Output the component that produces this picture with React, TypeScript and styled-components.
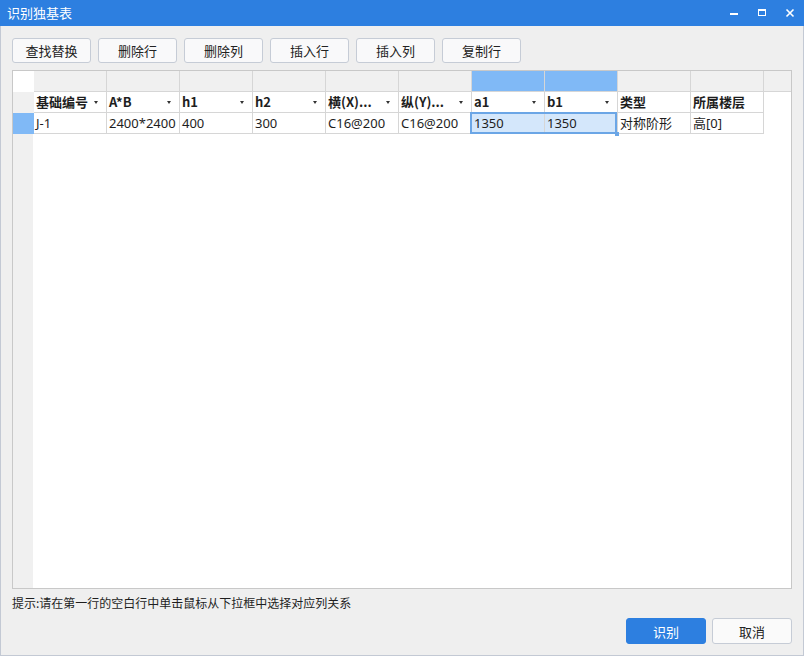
import React from "react";
import styled, { createGlobalStyle } from "styled-components";

const Global = createGlobalStyle`
  html, body { margin: 0; padding: 0; background: #efefef; }
  body { font-family: "Noto Sans", "Noto Sans CJK SC", sans-serif; }
  * { box-sizing: border-box; }
`;

const FONT = `"Noto Sans", "Noto Sans CJK SC", sans-serif`;

const Window = styled.div`
  width: 804px;
  height: 656px;
  display: flex;
  flex-direction: column;
  background: #efefef;
  font-family: ${FONT};
  color: #222;
`;

const TitleBar = styled.div`
  height: 26px;
  flex: none;
  background: #2d7fe0;
  display: flex;
  align-items: center;
  padding-left: 7px;
  color: #fff;
  font-size: 13px;
  font-family: "Noto Sans CJK SC", sans-serif;
`;

const Title = styled.div`
  flex: 1;
  line-height: 26px;
`;

const WinCtl = styled.div`
  width: 28px;
  height: 26px;
  display: flex;
  align-items: center;
  justify-content: center;
`;

const Body = styled.div`
  flex: 1;
  display: flex;
  flex-direction: column;
  padding: 12px 11px 11px 11px;
  border: 1px solid #c3c9d4;
  border-top: none;
`;

const Toolbar = styled.div`
  display: flex;
  gap: 7px;
  height: 25px;
  flex: none;
`;

const ToolButton = styled.button`
  width: 79px;
  height: 25px;
  border: 1px solid #c6ccd6;
  border-radius: 3px;
  background: #f9f9fa;
  font-family: "Noto Sans CJK SC", sans-serif;
  font-size: 13px;
  color: #222;
  padding: 0;
  line-height: 23px;
`;

const Table = styled.div`
  margin-top: 7px;
  height: 519px;
  flex: none;
  border: 1px solid #c8c8c8;
  background: #fff;
  display: flex;
  flex-direction: column;
  position: relative;
`;

const Row = styled.div`
  display: flex;
  height: 21px;
  flex: none;
`;

type Tone = "white" | "grey" | "blue" | "light";
const toneBg: Record<Tone, string> = {
  white: "#ffffff",
  grey: "#f0f0f0",
  blue: "#80b9f6",
  light: "#d4e7fb",
};

const RowHead = styled.div<{ $tone: Tone }>`
  width: 21px;
  flex: none;
  background: ${(p) => toneBg[p.$tone]};
`;

const Cell = styled.div<{ $tone: Tone; $bold?: boolean }>`
  width: 73px;
  flex: none;
  position: relative;
  background: ${(p) => toneBg[p.$tone]};
  border-right: 1px solid #d6d6d6;
  border-bottom: 1px solid #d6d6d6;
  padding: 0 2px;
  display: flex;
  align-items: center;
  font-size: 13px;
  font-weight: ${(p) => (p.$bold ? 700 : 400)};
  font-family: ${(p) => (p.$bold ? `"Noto Sans CJK SC", sans-serif` : FONT)};
  color: #1e1e1e;
  white-space: nowrap;
  line-height: 20px;
`;

const Arrow = styled.span`
  position: absolute;
  right: 8px;
  top: 9px;
  width: 0;
  height: 0;
  border-left: 2.5px solid transparent;
  border-right: 2.5px solid transparent;
  border-top: 3px solid #333;
`;

const Filler = styled.div<{ $tone: Tone; $line?: boolean }>`
  flex: 1;
  background: ${(p) => toneBg[p.$tone]};
  border-bottom: 1px solid ${(p) => (p.$line ? "#d6d6d6" : "transparent")};
`;

const Rest = styled.div`
  flex: 1;
  display: flex;
`;

const RestStrip = styled.div`
  width: 20px;
  background: #f0f0f0;
`;

const Selection = styled.div`
  position: absolute;
  left: 457px;
  top: 41px;
  width: 147px;
  height: 22px;
  border: 2px solid #6ba6e6;
  pointer-events: none;
`;

const Handle = styled.div`
  position: absolute;
  right: -4px;
  bottom: -4px;
  width: 4px;
  height: 4px;
  background: #6ba6e6;
`;

const Hint = styled.div`
  height: 29px;
  flex: none;
  padding-top: 6px;
  font-size: 12px;
  line-height: 16px;
  font-family: "Noto Sans CJK SC", sans-serif;
  color: #1e1e1e;
`;

const Footer = styled.div`
  display: flex;
  justify-content: flex-end;
  gap: 6px;
  height: 26px;
  flex: none;
`;

const DlgButton = styled.button<{ $primary?: boolean }>`
  width: 80px;
  height: 26px;
  border-radius: 3px;
  border: 1px solid ${(p) => (p.$primary ? "#2d7fe0" : "#c6ccd6")};
  background: ${(p) => (p.$primary ? "#2d7fe0" : "#fafafa")};
  color: ${(p) => (p.$primary ? "#fff" : "#222")};
  font-family: "Noto Sans CJK SC", sans-serif;
  font-size: 13px;
  padding: 0;
`;

const headers: { label: string; arrow: boolean }[] = [
  { label: "基础编号", arrow: true },
  { label: "A*B", arrow: true },
  { label: "h1", arrow: true },
  { label: "h2", arrow: true },
  { label: "横(X)...", arrow: true },
  { label: "纵(Y)...", arrow: true },
  { label: "a1", arrow: true },
  { label: "b1", arrow: true },
  { label: "类型", arrow: false },
  { label: "所属楼层", arrow: false },
];

const data = ["J-1", "2400*2400", "400", "300", "C16@200", "C16@200", "1350", "1350", "对称阶形", "高[0]"];
const selectedCols = new Set([6, 7]);

const tools = ["查找替换", "删除行", "删除列", "插入行", "插入列", "复制行"];

export default function App() {
  return (
    <Window>
      <Global />
      <TitleBar>
        <Title>识别独基表</Title>
        <WinCtl>
          <svg width="10" height="10" viewBox="0 0 10 10">
            <rect x="1" y="5" width="8" height="2" fill="#fff" />
          </svg>
        </WinCtl>
        <WinCtl>
          <svg width="10" height="10" viewBox="0 0 10 10">
            <rect x="1.5" y="1.5" width="7" height="6" fill="none" stroke="#fff" strokeWidth="1" />
            <rect x="1" y="1" width="8" height="2" fill="#fff" />
          </svg>
        </WinCtl>
        <WinCtl>
          <svg width="10" height="10" viewBox="0 0 10 10">
            <path d="M1.5 1.5 L8.5 8.5 M8.5 1.5 L1.5 8.5" stroke="#fff" strokeWidth="1.6" />
          </svg>
        </WinCtl>
      </TitleBar>
      <Body>
        <Toolbar>
          {tools.map((t) => (
            <ToolButton key={t}>{t}</ToolButton>
          ))}
        </Toolbar>
        <Table>
          <Row>
            <RowHead $tone="white" />
            {headers.map((h, i) => (
              <Cell key={i} $tone={selectedCols.has(i) ? "blue" : "grey"} />
            ))}
            <Filler $tone="grey" $line />
          </Row>
          <Row>
            <RowHead $tone="grey" />
            {headers.map((h, i) => (
              <Cell key={i} $tone="white" $bold>
                {h.label}
                {h.arrow && <Arrow />}
              </Cell>
            ))}
            <Filler $tone="white" />
          </Row>
          <Row>
            <RowHead $tone="blue" />
            {data.map((d, i) => (
              <Cell key={i} $tone={selectedCols.has(i) ? "light" : "white"}>
                {d}
              </Cell>
            ))}
            <Filler $tone="white" />
          </Row>
          <Rest>
            <RestStrip />
          </Rest>
          <Selection>
            <Handle />
          </Selection>
        </Table>
        <Hint>提示:请在第一行的空白行中单击鼠标从下拉框中选择对应列关系</Hint>
        <Footer>
          <DlgButton $primary>识别</DlgButton>
          <DlgButton>取消</DlgButton>
        </Footer>
      </Body>
    </Window>
  );
}
